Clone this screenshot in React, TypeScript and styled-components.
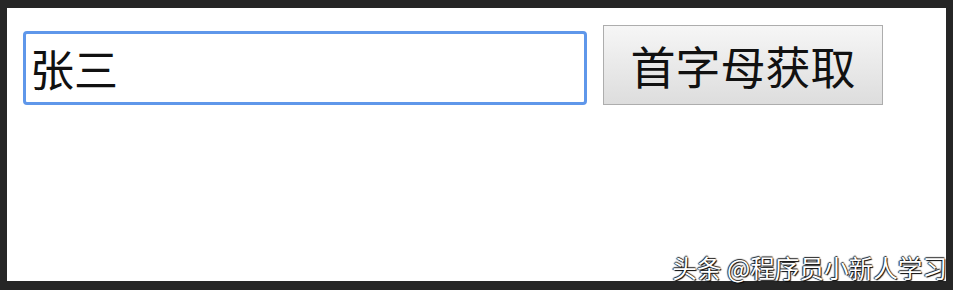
import React, { useState } from 'react';
import styled, { createGlobalStyle } from 'styled-components';

const GlobalStyle = createGlobalStyle`
  html, body {
    margin: 0;
    padding: 0;
    background: #262626;
  }
  body {
    font-family: "Noto Sans CJK SC", "Noto Sans", sans-serif;
  }
`;

const Frame = styled.div`
  width: 953px;
  height: 290px;
  box-sizing: border-box;
  padding: 8px 7px 9px 7px;
  background: #262626;
`;

const Panel = styled.div`
  position: relative;
  height: 100%;
  background: #ffffff;
  box-sizing: border-box;
  padding: 17px 16px 0 16px;
`;

const Row = styled.div`
  display: flex;
  align-items: flex-end;
  gap: 16px;
`;

const NameInput = styled.input`
  width: 564px;
  height: 74px;
  box-sizing: border-box;
  border: 3px solid #5f97ea;
  border-radius: 4px;
  padding: 0 0 0 4px;
  font-family: "Noto Sans CJK SC", sans-serif;
  font-size: 44px;
  color: #111;
  outline: none;
  background: #fff;
`;

const GetButton = styled.button`
  width: 280px;
  height: 80px;
  box-sizing: border-box;
  border: 1px solid #adadad;
  border-radius: 0;
  background: linear-gradient(#f6f6f6, #dddddd);
  font-family: "Noto Sans CJK SC", sans-serif;
  font-size: 45px;
  color: #111;
  padding: 0;
  line-height: 1;
  cursor: pointer;
`;

const Watermark = styled.div`
  position: absolute;
  right: -1px;
  bottom: 1px;
  font-family: "Noto Sans CJK SC", sans-serif;
  font-size: 24.6px;
  line-height: 1;
  color: #ffffff;
  text-shadow: 1px 1px 1px #000, -1px 0 1px #222, 0 -1px 1px #222;
  white-space: nowrap;
`;

export default function App() {
  const [name, setName] = useState('张三');

  return (
    <>
      <GlobalStyle />
      <Frame>
        <Panel>
          <Row>
            <NameInput value={name} onChange={(e) => setName(e.target.value)} />
            <GetButton>首字母获取</GetButton>
          </Row>
          <Watermark>头条 @程序员小新人学习</Watermark>
        </Panel>
      </Frame>
    </>
  );
}
